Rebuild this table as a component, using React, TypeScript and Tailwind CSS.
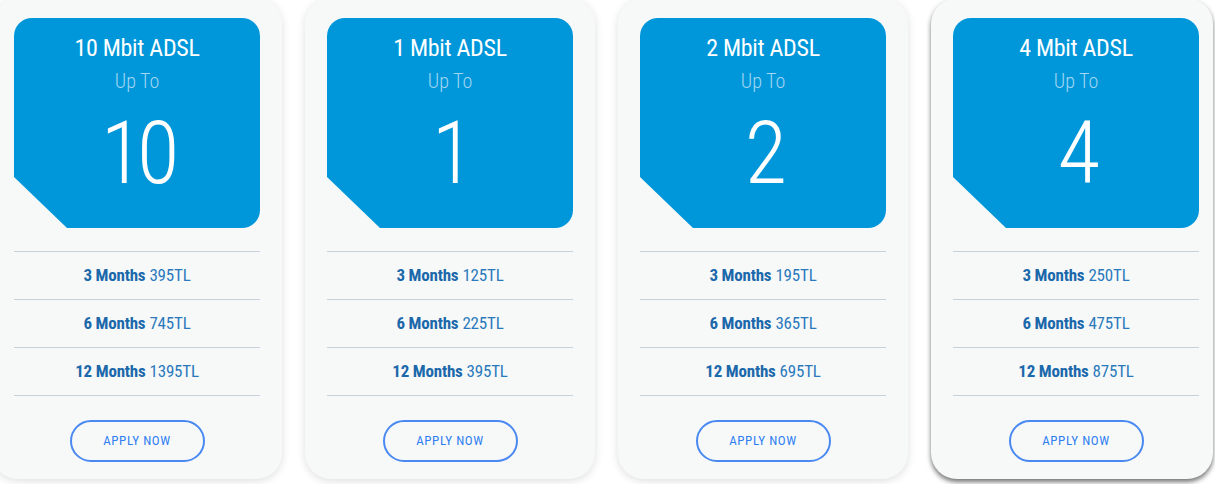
import React from 'react';

interface Plan {
  id: number;
  speed: string;
  prices: { months: number; price: string }[];
  hover?: boolean;
}

const PLANS: Plan[] = [
  { id: 1, speed: '10', prices: [{ months: 3, price: '395TL' }, { months: 6, price: '745TL' }, { months: 12, price: '1395TL' }] },
  { id: 2, speed: '1', prices: [{ months: 3, price: '125TL' }, { months: 6, price: '225TL' }, { months: 12, price: '395TL' }] },
  { id: 3, speed: '2', prices: [{ months: 3, price: '195TL' }, { months: 6, price: '365TL' }, { months: 12, price: '695TL' }] },
  { id: 4, speed: '4', prices: [{ months: 3, price: '250TL' }, { months: 6, price: '475TL' }, { months: 12, price: '875TL' }], hover: true },
];

// Roboto at 75% width stands in for the condensed face
const FONT = "font-['Roboto',sans-serif] font-stretch-condensed";

const PlanCard: React.FC<{ plan: Plan }> = ({ plan }) => {
  return (
    <div
      className={`shrink-0 bg-[#f7f9f9] rounded-[26px] pt-5 pb-[17px] pl-[22px] ${
        plan.hover
          ? 'w-[282px] pr-[14px] shadow-[0_3px_5px_rgba(0,0,0,0.55)]'
          : 'w-[290px] pr-[22px] shadow-[0_2px_8px_rgba(0,0,0,0.13)]'
      }`}
    >
      <div className="h-[210px] bg-[#0097da] rounded-[18px] [clip-path:polygon(0_0,100%_0,100%_100%,53px_100%,0_calc(100%-51px))] flex flex-col items-center pt-[16px] text-white">
        <h3 className="text-[24px] leading-[29px] tracking-[-0.3px]">{plan.speed} Mbit ADSL</h3>
        <p className="mt-[5px] text-[20px] leading-[26px] font-light text-[#a3d6f2]">Up To</p>
        <p className="mt-[16px] text-[87px] leading-none font-light tracking-[-6px]">{plan.speed}</p>
      </div>

      <ul className="mt-[23px] border-t border-[#c6d1de]">
        {plan.prices.map((p) => (
          <li
            key={p.months}
            className="h-12 border-b border-[#c6d1de] flex items-center justify-center text-[17px] tracking-[-0.2px] text-[#1b68ab]"
          >
            <span className="font-bold">{p.months} Months</span>
            <span className="ml-[4px] text-[#2b79bd]">{p.price}</span>
          </li>
        ))}
      </ul>

      <div className="mt-6 flex justify-center">
        <button className="w-[135px] h-[42px] rounded-full border-2 border-[#4a89f1] text-[13px] tracking-[0.6px] text-[#2f7ff0]">
          APPLY NOW
        </button>
      </div>
    </div>
  );
};

export default function App() {
  return (
    <div className={`w-[1215px] h-[484px] overflow-hidden bg-white ${FONT}`}>
      <div className="flex gap-[23px] -ml-2 -mt-[2px]">
        {PLANS.map((plan) => (
          <PlanCard key={plan.id} plan={plan} />
        ))}
      </div>
    </div>
  );
}
